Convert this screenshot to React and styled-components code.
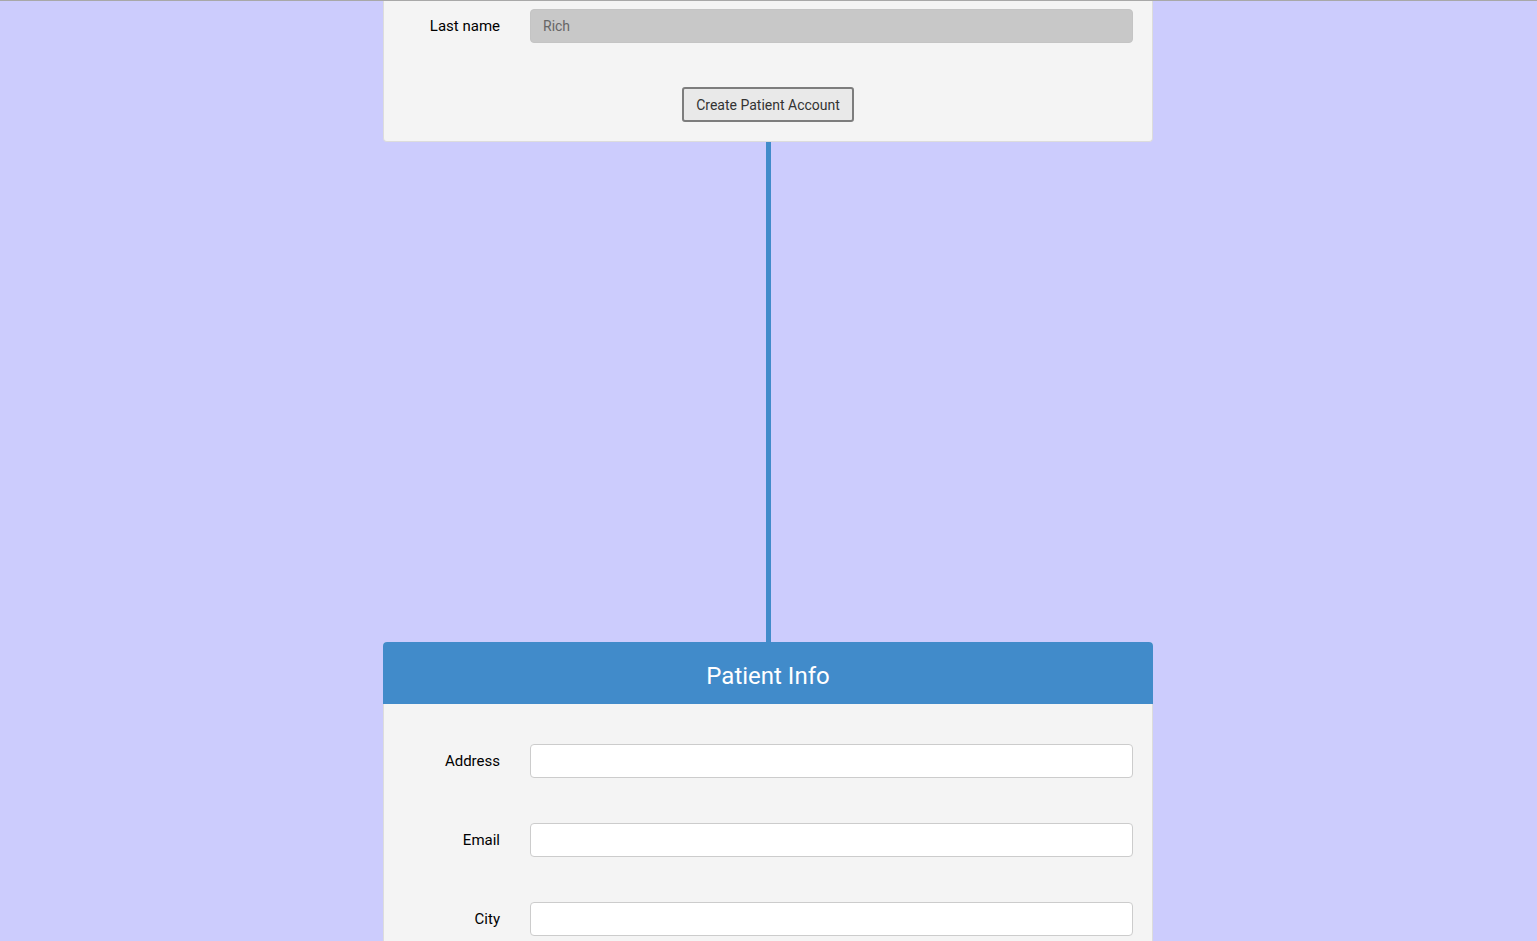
import React from "react";
import styled, { createGlobalStyle } from "styled-components";

const GlobalStyle = createGlobalStyle`
  html, body {
    margin: 0;
    padding: 0;
  }
  body {
    background-color: #ccccfd;
    border-top: 1px solid #a8a8a8;
    font-family: "Roboto", "Liberation Sans", sans-serif;
    overflow: hidden;
  }
`;

function FieldRow({ label, value, disabled }) {
  return (
    <Row>
      <Label>{label}</Label>
      <Input defaultValue={value} disabled={disabled} />
    </Row>
  );
}

export default function App() {
  return (
    <>
      <GlobalStyle />
      <Page>
        <AccountCard>
          <FieldRow label="Last name" value="Rich" disabled />
          <Actions>
            <Button>Create Patient Account</Button>
          </Actions>
        </AccountCard>
        <Connector />
        <InfoCard>
          <Header>Patient Info</Header>
          <InfoBody>
            <FieldRow label="Address" />
            <FieldRow label="Email" />
            <FieldRow label="City" />
          </InfoBody>
        </InfoCard>
      </Page>
    </>
  );
}

const Page = styled.div`
  display: flex;
  flex-direction: column;
  align-items: center;
  padding-right: 1px;
`;

const AccountCard = styled.div`
  width: 770px;
  box-sizing: border-box;
  background-color: #f4f4f4;
  border: 1px solid #dcdcdc;
  border-top: none;
  border-radius: 0 0 4px 4px;
  padding: 8px 0 19px;
  display: flex;
  flex-direction: column;
`;

const Row = styled.div`
  display: flex;
  align-items: center;
  gap: 30px;
  padding-right: 19px;
`;

const Label = styled.label`
  width: 116px;
  flex-shrink: 0;
  text-align: right;
  font-size: 15px;
  color: #000;
`;

const Input = styled.input`
  flex: 1;
  height: 34px;
  box-sizing: border-box;
  border: 1px solid #cccccc;
  border-radius: 4px;
  background-color: #fff;
  padding: 0 12px;
  font-family: "Roboto", "Liberation Sans", sans-serif;
  font-size: 14px;
  color: #666;
  outline: none;

  &:disabled {
    background-color: #c8c8c8;
    border-color: #c4c4c4;
    color: #666;
  }
`;

const Actions = styled.div`
  display: flex;
  justify-content: center;
  margin-top: 44px;
`;

const Button = styled.button`
  height: 35px;
  padding: 0 12px;
  background-color: #e9e9e9;
  border: 2px solid #7d7d7d;
  border-radius: 3px;
  font-family: "Roboto", "Liberation Sans", sans-serif;
  font-size: 14px;
  color: #333;
  cursor: pointer;
`;

const Connector = styled.div`
  width: 5px;
  height: 500px;
  background-color: #418bca;
`;

const InfoCard = styled.div`
  width: 770px;
  background-color: #f4f4f4;
  border-radius: 4px 4px 0 0;
  overflow: hidden;
`;

const Header = styled.div`
  height: 62px;
  box-sizing: border-box;
  padding-top: 6px;
  background-color: #418bca;
  color: #fff;
  font-size: 24px;
  display: flex;
  align-items: center;
  justify-content: center;
`;

const InfoBody = styled.div`
  display: flex;
  flex-direction: column;
  gap: 45px;
  padding: 40px 0;
  border: 1px solid #dcdcdc;
  border-top: none;
  border-bottom: none;
`;
